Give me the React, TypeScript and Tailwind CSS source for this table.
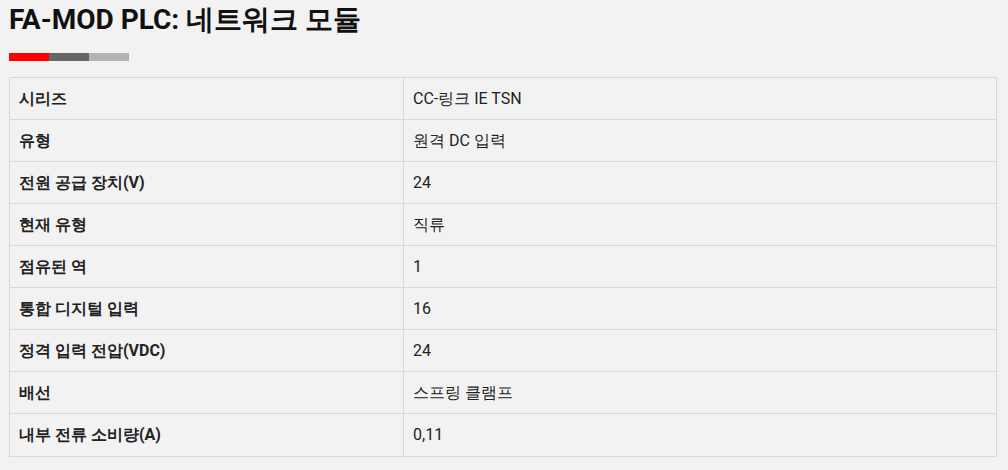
const specs: [string, string][] = [
  ["시리즈", "CC-링크 IE TSN"],
  ["유형", "원격 DC 입력"],
  ["전원 공급 장치(V)", "24"],
  ["현재 유형", "직류"],
  ["점유된 역", "1"],
  ["통합 디지털 입력", "16"],
  ["정격 입력 전압(VDC)", "24"],
  ["배선", "스프링 클램프"],
  ["내부 전류 소비량(A)", "0,11"],
];

export default function App() {
  return (
    <div
      className="min-h-[470px] bg-[#f2f2f2] px-[9px] pt-[3px] text-[#222]"
      style={{ fontFamily: "Roboto, sans-serif" }}
    >
      <h1 className="text-[28px] font-bold leading-[34px] text-[#111]">FA-MOD PLC: 네트워크 모듈</h1>
      <div className="mt-[16px] flex h-[8px]">
        <div className="w-[40px] bg-[#ff0000]" />
        <div className="w-[40px] bg-[#666666]" />
        <div className="w-[40px] bg-[#b3b3b3]" />
      </div>
      <div className="mt-[16px] w-[988px] border border-[#d9d9d9]">
        {specs.map(([k, v], i) => (
          <div
            key={k}
            className={`grid grid-cols-[394px_1fr] h-[42px] ${i < specs.length - 1 ? "border-b border-[#d9d9d9]" : "h-[41px]"}`}
          >
            <div className="flex items-center border-r border-[#d9d9d9] pl-[9px] text-[16px] font-bold">{k}</div>
            <div className="flex items-center pl-[9px] text-[16px]">{v}</div>
          </div>
        ))}
      </div>
    </div>
  );
}
